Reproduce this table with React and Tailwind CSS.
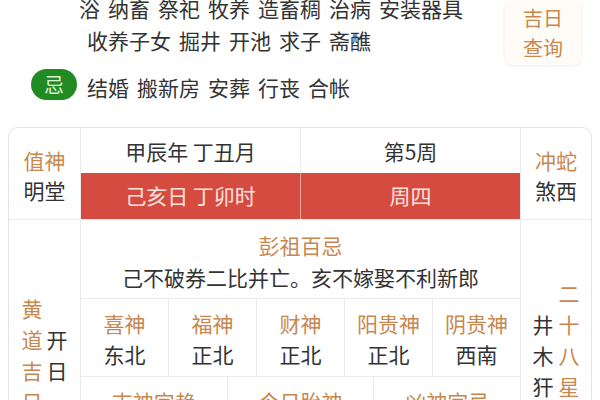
import React from "react";

const Words = ({ words, className }) => (
  <div className={"flex whitespace-nowrap gap-[8px] " + className}>
    {words.map((w, i) => (
      <span key={i}>{w}</span>
    ))}
  </div>
);

const VCol = ({ chars, className }) => (
  <div className={"flex flex-col items-center leading-[31px] " + className}>
    {chars.split("").map((c, i) => (
      <span key={i}>{c}</span>
    ))}
  </div>
);

export default function App() {
  const grid5 = [
    ["喜神", "东北"],
    ["福神", "正北"],
    ["财神", "正北"],
    ["阳贵神", "正北"],
    ["阴贵神", "西南"],
  ];
  const grid3 = [
    ["吉神宜趋", "天恩 母仓"],
    ["今日胎神", "厨灶厕外"],
    ["凶神宜忌", "月刑 五虚"],
  ];
  return (
    <div className="w-[600px] h-[400px] overflow-hidden bg-white font-['Noto_Sans_CJK_SC','Noto_Sans',sans-serif] text-[#333]">
      {/* top area */}
      <div className="flex items-start h-[100px]">
        <div className="flex-1 -mt-[8px] text-[21px] leading-[32px]">
          <Words
            className="pl-[79px]"
            words={["浴", "纳畜", "祭祀", "牧养", "造畜稠", "治病", "安装器具"]}
          />
          <Words
            className="pl-[87px]"
            words={["收养子女", "掘井", "开池", "求子", "斋醮"]}
          />
          <div className="mt-[13px] pl-[31px] flex items-start">
            <div className="w-[46px] h-[31px] rounded-full bg-[#228a22] text-[#d8f3d0] text-[20px] flex items-center justify-center">
              忌
            </div>
            <Words
              className="ml-[10px] mt-[3px] leading-[31px]"
              words={["结婚", "搬新房", "安葬", "行丧", "合帐"]}
            />
          </div>
        </div>
        <div className="mr-[19px] w-[76px] h-[65px] rounded-[8px] bg-[#fffcf8] shadow-[0_1px_4px_rgba(0,0,0,0.07)] flex flex-col items-center justify-center text-[20px] leading-[30px] text-[#c8874f]">
          <span>吉日</span>
          <span>查询</span>
        </div>
      </div>

      {/* table */}
      <div className="mt-[27px] ml-[8px] w-[584px] border border-[#e4e4e4] rounded-[10px] overflow-hidden text-[21px]">
        {/* row A */}
        <div className="flex border-b border-[#ebebeb]">
          <div className="w-[72px] border-r border-[#ebebeb] flex flex-col items-center justify-center leading-[30px] pt-[3px]">
            <span className="text-[#c8874f]">值神</span>
            <span>明堂</span>
          </div>
          <div className="flex-1 flex flex-col">
            <div className="h-[45px] flex">
              <div className="flex-1 border-r border-[#ebebeb] flex items-center justify-center pt-[2px]">
                甲辰年 丁丑月
              </div>
              <div className="flex-1 flex items-center justify-center pt-[2px]">第5周</div>
            </div>
            <div className="h-[46px] flex bg-[#d64b3f] text-[#fde4e0]">
              <div className="flex-1 border-r border-[#eca59d] flex items-center justify-center">
                己亥日 丁卯时
              </div>
              <div className="flex-1 flex items-center justify-center">周四</div>
            </div>
          </div>
          <div className="w-[71px] border-l border-[#ebebeb] flex flex-col items-center justify-center leading-[30px] pt-[3px]">
            <span className="text-[#c8874f]">冲蛇</span>
            <span>煞西</span>
          </div>
        </div>

        {/* row B */}
        <div className="flex h-[270px]">
          <div className="w-[72px] border-r border-[#ebebeb] flex items-center justify-center gap-[4px]">
            <VCol chars="黄道吉日" className="text-[#c8874f]" />
            <VCol chars="开日" />
          </div>
          <div className="flex-1 flex flex-col">
            <div className="pt-[9px] pb-[5px] border-b border-[#ebebeb] text-center leading-[32px]">
              <div className="text-[#c8874f]">彭祖百忌</div>
              <div className="whitespace-nowrap">己不破券二比并亡。亥不嫁娶不利新郎</div>
            </div>
            <div className="flex border-b border-[#ebebeb]">
              {grid5.map(([a, b], i) => (
                <div
                  key={i}
                  className={
                    "flex-1 text-center pt-[9px] pb-[6px] leading-[31px] whitespace-nowrap " +
                    (i < 4 ? "border-r border-[#ebebeb]" : "")
                  }
                >
                  <div className="text-[#c8874f]">{a}</div>
                  <div>{b}</div>
                </div>
              ))}
            </div>
            <div className="flex flex-1">
              {grid3.map(([a, b], i) => (
                <div
                  key={i}
                  className={
                    "flex-1 text-center pt-[9px] leading-[31px] whitespace-nowrap " +
                    (i < 2 ? "border-r border-[#ebebeb]" : "")
                  }
                >
                  <div className="text-[#c8874f]">{a}</div>
                  <div>{b}</div>
                </div>
              ))}
            </div>
          </div>
          <div className="w-[71px] border-l border-[#ebebeb] flex items-center justify-center gap-[5px]">
            <VCol chars="井木犴" />
            <VCol chars="二十八星宿" className="text-[#c8874f]" />
          </div>
        </div>
      </div>
    </div>
  );
}
